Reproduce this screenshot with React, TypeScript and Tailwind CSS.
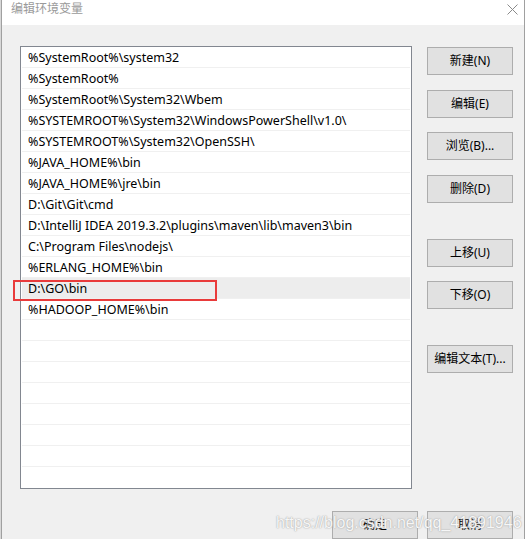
import React from 'react';

const paths = [
  '%SystemRoot%\\system32',
  '%SystemRoot%',
  '%SystemRoot%\\System32\\Wbem',
  '%SYSTEMROOT%\\System32\\WindowsPowerShell\\v1.0\\',
  '%SYSTEMROOT%\\System32\\OpenSSH\\',
  '%JAVA_HOME%\\bin',
  '%JAVA_HOME%\\jre\\bin',
  'D:\\Git\\Git\\cmd',
  'D:\\IntelliJ IDEA 2019.3.2\\plugins\\maven\\lib\\maven3\\bin',
  'C:\\Program Files\\nodejs\\',
  '%ERLANG_HOME%\\bin',
  'D:\\GO\\bin',
  '%HADOOP_HOME%\\bin',
];

const ROWS = 21;
const SELECTED = 11;

const font = { fontFamily: '"Noto Sans", "Noto Sans CJK SC", sans-serif' };

const Button = ({ label, className = '' }: { label: string; className?: string }) => (
  <div
    className={`w-[86px] h-[28px] flex items-center justify-center bg-[#e1e1e1] border border-[#adadad] text-[12px] text-black ${className}`}
  >
    {label}
  </div>
);

export default function App() {
  const rows = Array.from({ length: ROWS }, (_, i) => paths[i] ?? '');

  return (
    <div className="relative w-[528px] h-[539px] overflow-hidden bg-white flex" style={font}>
      {/* sliver of whatever sits behind the dialog */}
      <div className="w-[1px] h-full bg-[#d8d8d8]" />

      <div className="w-[524px] h-full flex flex-col border-l border-r border-[#a0a0a0]">
        {/* title bar */}
        <div className="h-[25px] shrink-0 bg-white flex items-start justify-between pl-[9px] pr-[6px]">
          <span className="text-[12px] leading-[16px] pt-[1px] text-[#9a9a9a]">编辑环境变量</span>
          <svg width="11" height="11" viewBox="0 0 11 11" className="mt-[4px]">
            <path d="M0.5 0.5 L10.5 10.5 M10.5 0.5 L0.5 10.5" stroke="#8a8a8a" strokeWidth="1" />
          </svg>
        </div>

        {/* body */}
        <div className="flex-1 bg-[#f0f0f0] pl-[18px] pt-[21px] pr-[11px]">
          <div className="flex">
            <div className="w-[392px] h-[443px] bg-white border border-[#828790] px-[1px]">
              {rows.map((text, i) => (
                <div
                  key={i}
                  className={`h-[21px] flex items-center pl-[6px] pt-[2px] text-[12.5px] text-black whitespace-nowrap ${
                    i < ROWS - 1 ? 'border-b border-[#f0f0f0]' : ''
                  } ${i === SELECTED ? 'bg-[#ededed]' : ''}`}
                >
                  {text}
                </div>
              ))}
            </div>

            <div className="ml-[15px] pt-[1px] flex flex-col">
              <Button label="新建(N)" />
              <Button label="编辑(E)" className="mt-[15px]" />
              <Button label="浏览(B)..." className="mt-[14px]" />
              <Button label="删除(D)" className="mt-[15px]" />
              <Button label="上移(U)" className="mt-[36px]" />
              <Button label="下移(O)" className="mt-[14px]" />
              <Button label="编辑文本(T)..." className="mt-[36px]" />
            </div>
          </div>

          <div className="mt-[22px] flex justify-end gap-[9px]">
            <Button label="确定" />
            <Button label="取消" />
          </div>
        </div>
      </div>

      {/* annotation around the GO entry */}
      <div className="absolute left-[13px] top-[280px] w-[204px] h-[21px] border-2 border-[#e93b3b]" />

      {/* blog watermark */}
      <div
        className="absolute left-[276px] top-[511px] text-[16px] text-white/90 [text-shadow:0_0_1px_#a0a0a0,0_0_2px_#b8b8b8]"
        style={{ fontFamily: '"Liberation Sans", Arial, sans-serif' }}
      >
        https://blog.csdn.net/qq_41891946
      </div>
    </div>
  );
}
